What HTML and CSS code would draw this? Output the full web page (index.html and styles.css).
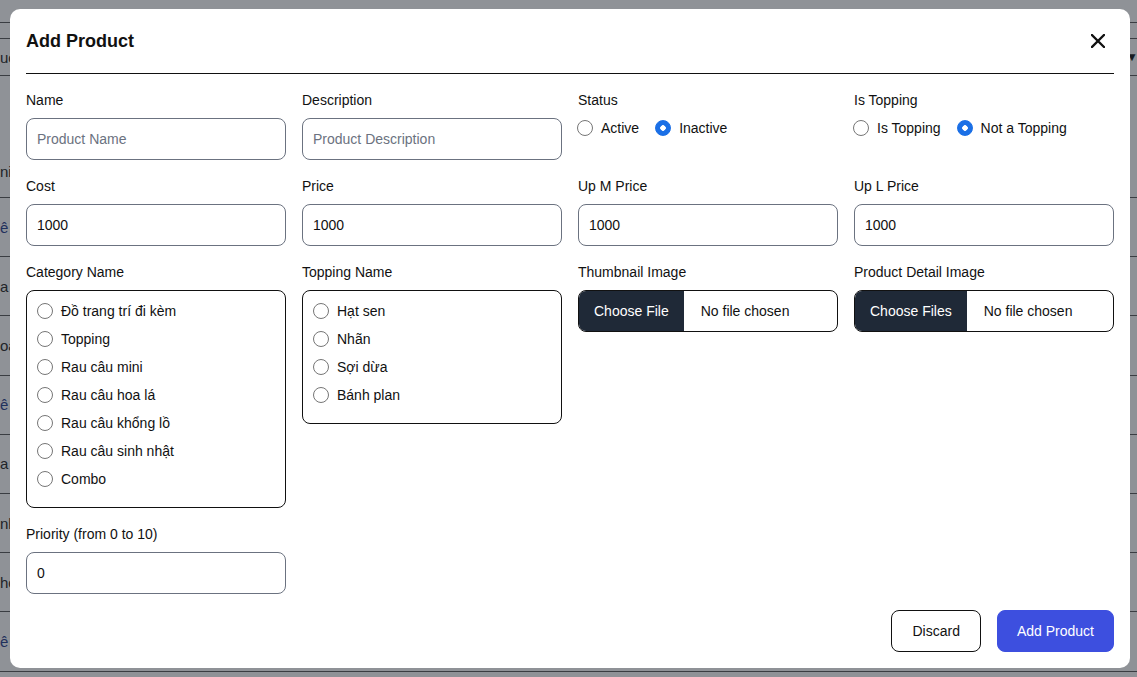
FILE: index.html
```html
<!DOCTYPE html>
<html lang="vi">
<head>
  <meta charset="UTF-8" />
  <meta name="viewport" content="width=device-width, initial-scale=1.0"/>
  <title>Products</title>
  <link rel="stylesheet" href="styles.css">
</head>
<body>
  <!-- trang danh sach di phia sau -->
  <div class="page">
    <div class="row row-top"></div>
    <div class="row row-gap"></div>
    <div class="row row-head"><span class="cell">uc</span><span class="sort">&#9660;</span></div>
    <div class="row row-first"><span class="cell">ni</span></div>
    <div class="row"><span class="cell link">ê</span></div>
    <div class="row"><span class="cell">a</span></div>
    <div class="row"><span class="cell">oa</span></div>
    <div class="row"><span class="cell link">ê</span></div>
    <div class="row"><span class="cell">a</span></div>
    <div class="row"><span class="cell">nh</span></div>
    <div class="row"><span class="cell">hơ</span></div>
    <div class="row"><span class="cell link">ê</span></div>
  </div>

  <div class="overlay">
    <div class="modal">
      <div class="modal-header">
        <h2>Add Product</h2>
        <button class="close" aria-label="close">
          <svg width="14" height="14" viewBox="0 0 14 14"><path d="M1 1L13 13M13 1L1 13" stroke="#111" stroke-width="2.3" stroke-linecap="square"/></svg>
        </button>
      </div>

      <form class="form-grid">
        <div class="field">
          <label for="name">Name</label>
          <input type="text" id="name" placeholder="Product Name" />
        </div>
        <div class="field">
          <label for="desc">Description</label>
          <input type="text" id="desc" placeholder="Product Description" />
        </div>
        <div class="field">
          <label>Status</label>
          <div class="radio-row">
            <label class="opt"><input type="radio" name="status" /> Active</label>
            <label class="opt"><input type="radio" name="status" checked /> Inactive</label>
          </div>
        </div>
        <div class="field">
          <label>Is Topping</label>
          <div class="radio-row">
            <label class="opt"><input type="radio" name="topping" /> Is Topping</label>
            <label class="opt"><input type="radio" name="topping" checked /> Not a Topping</label>
          </div>
        </div>

        <div class="field">
          <label for="cost">Cost</label>
          <input type="number" id="cost" value="1000" />
        </div>
        <div class="field">
          <label for="price">Price</label>
          <input type="number" id="price" value="1000" />
        </div>
        <div class="field">
          <label for="upm">Up M Price</label>
          <input type="number" id="upm" value="1000" />
        </div>
        <div class="field">
          <label for="upl">Up L Price</label>
          <input type="number" id="upl" value="1000" />
        </div>

        <div class="field">
          <label>Category Name</label>
          <div class="choice-box">
            <label class="opt"><input type="radio" name="cat" /> Đồ trang trí đi kèm</label>
            <label class="opt"><input type="radio" name="cat" /> Topping</label>
            <label class="opt"><input type="radio" name="cat" /> Rau câu mini</label>
            <label class="opt"><input type="radio" name="cat" /> Rau câu hoa lá</label>
            <label class="opt"><input type="radio" name="cat" /> Rau câu khổng lồ</label>
            <label class="opt"><input type="radio" name="cat" /> Rau câu sinh nhật</label>
            <label class="opt"><input type="radio" name="cat" /> Combo</label>
          </div>
        </div>
        <div class="field">
          <label>Topping Name</label>
          <div class="choice-box">
            <label class="opt"><input type="checkbox" /> Hạt sen</label>
            <label class="opt"><input type="checkbox" /> Nhãn</label>
            <label class="opt"><input type="checkbox" /> Sợi dừa</label>
            <label class="opt"><input type="checkbox" /> Bánh plan</label>
          </div>
        </div>
        <div class="field">
          <label>Thumbnail Image</label>
          <div class="file-box">
            <span class="file-btn">Choose File</span>
            <span class="file-name">No file chosen</span>
          </div>
        </div>
        <div class="field">
          <label>Product Detail Image</label>
          <div class="file-box">
            <span class="file-btn">Choose Files</span>
            <span class="file-name">No file chosen</span>
          </div>
        </div>

        <div class="field">
          <label for="priority">Priority (from 0 to 10)</label>
          <input type="number" id="priority" value="0" />
        </div>
      </form>

      <div class="modal-footer">
        <button class="btn btn-outline">Discard</button>
        <button class="btn btn-primary">Add Product</button>
      </div>
    </div>
  </div>
</body>
</html>
```

FILE: styles.css
```css
* {
  box-sizing: border-box;
}

body {
  margin: 0;
  font-family: "Liberation Sans", Arial, sans-serif;
  font-size: 14px;
  color: #111;
  background: #fff;
}

/* ---- halaman belakang ---- */
.page {
  width: 1137px;
  height: 677px;
  overflow: hidden;
}

.row {
  display: flex;
  align-items: center;
  justify-content: space-between;
  height: 59.2px;
  border-bottom: 1px solid #555;
}

.row-top {
  height: 23px;
}

.row-gap {
  height: 16px;
}

.row-head {
  height: 37px;
}

.row-first {
  height: 122px;
  align-items: flex-end;
  padding-bottom: 17px;
}

.cell {
  white-space: nowrap;
  font-size: 15px;
  color: #222;
}

.cell.link {
  color: #1e3a8a;
}

.sort {
  font-size: 12px;
  margin-right: -1px;
}

/* ---- modal ---- */
.overlay {
  position: fixed;
  inset: 0;
  background: rgba(31, 37, 48, 0.5);
  padding: 9px 7px 9px 10px;
}

.modal {
  background: #fff;
  border-radius: 10px;
  padding: 0 16px 16px;
}

.modal-header {
  display: flex;
  justify-content: space-between;
  align-items: center;
  padding: 20px 0;
  border-bottom: 1px solid #111;
}

.modal-header h2 {
  margin: 0;
  font-size: 18px;
  line-height: 24px;
  font-weight: bold;
}

.close {
  background: none;
  border: none;
  padding: 0;
  margin-right: 9px;
  display: flex;
  cursor: pointer;
}

.form-grid {
  display: grid;
  grid-template-columns: repeat(4, 1fr);
  gap: 16px;
  margin-top: 16px;
  align-items: start;
}

.field {
  display: flex;
  flex-direction: column;
  gap: 8px;
}

.field > label {
  line-height: 20px;
}

.field input[type="text"],
.field input[type="number"] {
  width: 100%;
  height: 42px;
  padding: 0 10px;
  border: 1px solid #6b7280;
  border-radius: 8px;
  font-family: inherit;
  font-size: 14px;
  color: #111;
  outline: none;
  -moz-appearance: textfield;
}

.field input::-webkit-outer-spin-button,
.field input::-webkit-inner-spin-button {
  -webkit-appearance: none;
  margin: 0;
}

.field input::placeholder {
  color: #6b7280;
}

.opt {
  display: flex;
  align-items: center;
  gap: 8px;
  line-height: 20px;
  white-space: nowrap;
}

/* radio bulet custom */
.opt input {
  appearance: none;
  -webkit-appearance: none;
  width: 16px;
  height: 16px;
  margin: 0;
  flex-shrink: 0;
  border: 1px solid #767676;
  border-radius: 50%;
  background: #fff;
}

.opt input:checked {
  border-color: #1a6fe6;
  background: radial-gradient(circle, #fff 0 2.5px, #1a6fe6 3px);
}

.radio-row {
  display: flex;
  gap: 16px;
  height: 20px;
  margin-left: -1px;
}

.choice-box {
  border: 1px solid #111;
  border-radius: 8px;
  padding: 6px 10px 14px;
}

.choice-box .opt {
  height: 28px;
}

.file-box {
  display: flex;
  align-items: stretch;
  height: 42px;
  border: 1px solid #111;
  border-radius: 8px;
  overflow: hidden;
}

.file-btn {
  display: flex;
  align-items: center;
  padding: 0 15px;
  background: #1f2937;
  color: #fff;
}

.file-name {
  display: flex;
  align-items: center;
  padding-left: 17px;
}

.modal-footer {
  display: flex;
  justify-content: flex-end;
  gap: 16px;
  margin-top: 16px;
}

.btn {
  height: 42px;
  padding: 0 20px;
  border-radius: 8px;
  font-family: inherit;
  font-size: 14px;
  cursor: pointer;
}

.btn-outline {
  background: #fff;
  border: 1px solid #111;
  color: #111;
}

.btn-primary {
  background: #3d4fdf;
  border: 1px solid #3d4fdf;
  color: #fff;
  padding: 0 19px;
}
```
